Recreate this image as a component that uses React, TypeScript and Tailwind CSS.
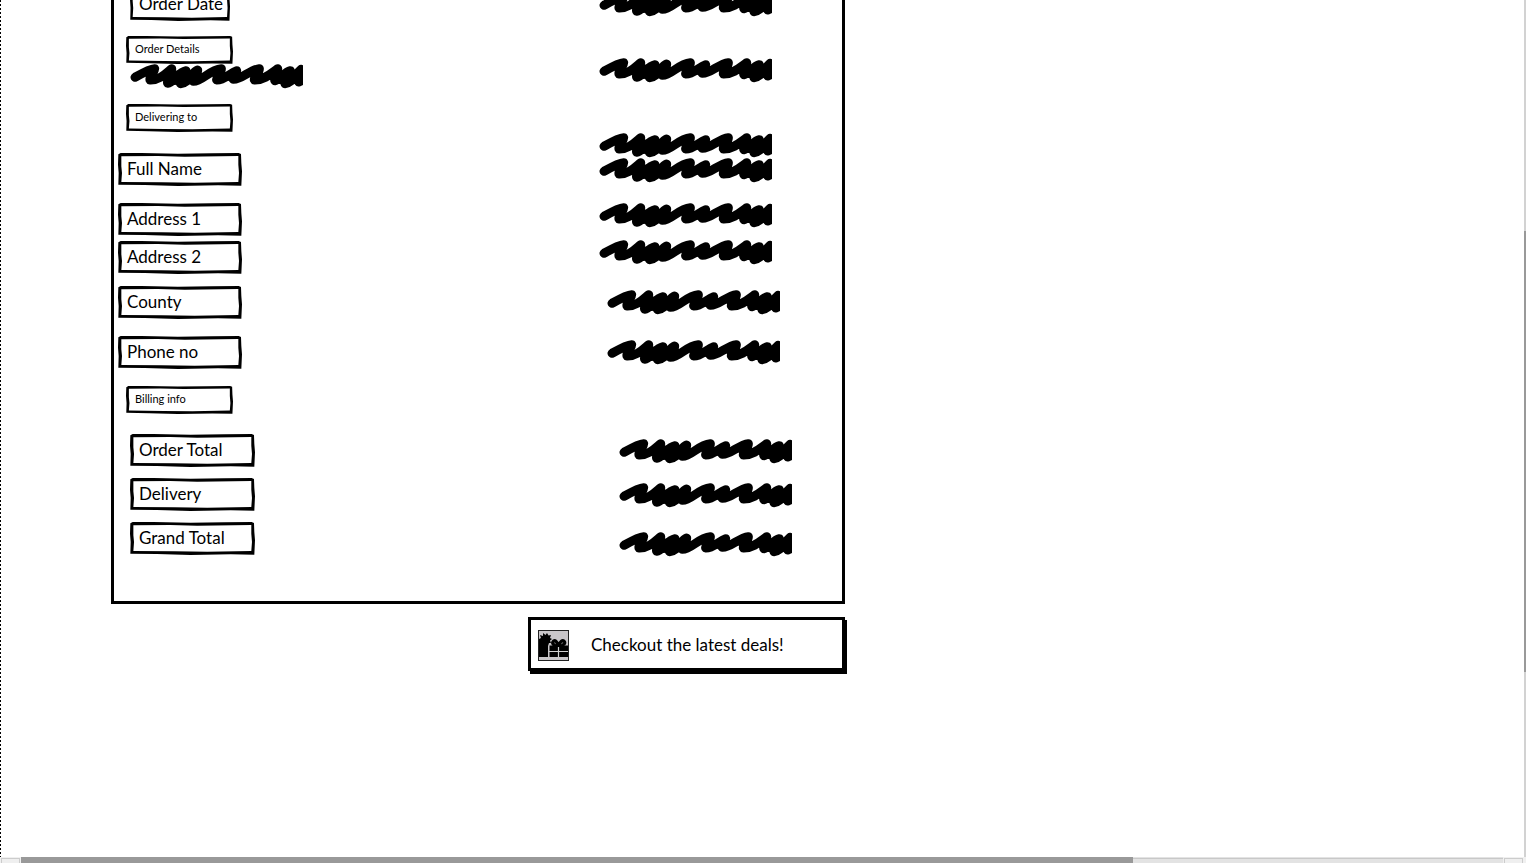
import type { ReactNode } from "react";

function SketchFrame() {
  return (
    <svg
      aria-hidden="true"
      className="pointer-events-none absolute inset-0 h-full w-full"
      viewBox="0 0 372 99"
      preserveAspectRatio="none"
    >
      <path
        fillRule="evenodd"
        d="M1 4 L8 0 L70 0 L180 2 L280 1 L362 0 L369 3 L370 30 L372 55 L370 98 L300 97 L180 99 L80 96 L1 95 L2 60 L0 35Z M10 10 L120 9 L200 11 L361 9 L361 35 L363 60 L361 87 L230 89 L130 88 L10 87 L12 60 L10 40Z"
      />
    </svg>
  );
}

function Label({ className, children }: { className: string; children: ReactNode }) {
  return (
    <div className={`relative flex shrink-0 items-center whitespace-nowrap pb-[2px] pl-[9px] ${className}`}>
      <SketchFrame />
      <span>{children}</span>
    </div>
  );
}

function Scribble({ className }: { className: string }) {
  return (
    <svg aria-hidden="true" className={`block h-[25px] w-[173px] shrink-0 ${className}`} viewBox="0 0 519 75">
      <path
        fill="none"
        stroke="black"
        strokeWidth="27"
        strokeLinecap="round"
        strokeLinejoin="round"
        d="M15 40 C36 28 58 15 74 14 C76 22 56 38 60 48 C88 49 108 28 125 14 C127 30 108 46 113 58 C130 56 145 24 168 20 C168 36 145 50 152 59 C175 58 185 25 203 18 C204 32 183 45 190 52 C216 53 238 17 274 14 C276 24 256 40 260 48 C282 49 300 27 320 20 C321 30 303 40 310 46 C335 47 360 17 388 14 C390 24 370 40 373 48 C402 49 424 28 443 14 C445 30 428 42 435 50 C450 48 463 24 481 20 C481 35 459 50 465 59 C487 58 494 32 513 16 C517 30 500 45 506 54 L535 42"
      />
      <path d="M100 36 L125 20 L205 18 L222 44 L190 60 L115 64Z M437 22 H519 V60 H445Z M60 24 H76 V46 H60Z M260 24 H290 L312 24 V50 H260Z M374 24 H392 V46 H374Z" />
    </svg>
  );
}

function GiftIcon() {
  return (
    <svg aria-hidden="true" className="h-[31px] w-[31px] shrink-0" viewBox="0 0 31 31">
      <rect x="0.5" y="0.5" width="30" height="30" fill="#c9c6c9" stroke="#222" />
      <path d="M1 9 L3 8 L2 5 L5 6 L5 3 L7.5 5 L9 3 L10.5 5.5 L13 5 L12 8 L14 9 L12 10.5 L13 13 L11 13 L10 16 L10 27 H1Z" />
      <path d="M11.5 15.5 H30 V27 H11.5Z" />
      <path
        d="M20.5 16 C19 11 17 10 15.5 11 C13.5 13 15 16 20.5 16 C26 16 28 13 26 11 C24.5 10 22 11 20.5 16Z"
        fill="#777"
        stroke="black"
        strokeWidth="3"
      />
      <path d="M20.5 17 V27 M11 21.5 H30" stroke="#d0d0d0" strokeWidth="1.2" />
    </svg>
  );
}

export default function App() {
  return (
    <div className="flex h-screen flex-col overflow-hidden bg-white font-['Lato','Noto_Sans',sans-serif] text-[17px] leading-6 text-black">
      <div className="flex min-h-0 flex-1">
        <div className="w-px shrink-0 bg-[repeating-linear-gradient(to_bottom,#000_0px,#000_2px,#fff_2px,#fff_4px)]" />
        <main className="min-w-0 flex-1 overflow-hidden pl-[110px]">
          <div className="w-full max-w-[734px]">
            <section className="flex h-[604px] justify-between border-3 border-t-0 border-black">
              <div className="-mt-3 flex flex-col pl-1">
                <Label className="ml-3 h-[33px] w-[100px]">Order Date</Label>
                <Label className="mt-[15px] ml-2 h-7 w-[107px] text-[11px]">Order Details</Label>
                <Scribble className="ml-3" />
                <Label className="mt-[15px] ml-2 h-7 w-[107px] text-[11px]">Delivering to</Label>
                <Label className="mt-[21px] h-[33px] w-[124px]">Full Name</Label>
                <Label className="mt-[17px] h-[33px] w-[124px]">Address 1</Label>
                <Label className="mt-[5px] h-[33px] w-[124px]">Address 2</Label>
                <Label className="mt-3 h-[33px] w-[124px]">County</Label>
                <Label className="mt-[17px] h-[33px] w-[124px]">Phone no</Label>
                <Label className="mt-[17px] ml-2 h-7 w-[107px] text-[11px]">Billing info</Label>
                <Label className="mt-5 ml-3 h-[33px] w-[125px]">Order Total</Label>
                <Label className="mt-[11px] ml-3 h-[33px] w-[125px]">Delivery</Label>
                <Label className="mt-[11px] ml-3 h-[33px] w-[125px]">Grand Total</Label>
              </div>
              <div className="-mt-2 flex w-[243px] flex-col">
                <Scribble className="" />
                <Scribble className="mt-[41px]" />
                <Scribble className="mt-[50px]" />
                <Scribble className="" />
                <Scribble className="mt-5" />
                <Scribble className="mt-3" />
                <Scribble className="mt-[25px] ml-2" />
                <Scribble className="mt-[25px] ml-2" />
                <Scribble className="mt-[74px] ml-5" />
                <Scribble className="mt-[19px] ml-5" />
                <Scribble className="mt-6 ml-5" />
              </div>
            </section>
            <button
              type="button"
              className="mt-[13px] ml-auto flex h-[54px] w-[317px] items-center gap-[22px] border-3 border-black bg-white pt-[2px] pl-[7px] shadow-[2px_3px_0_black]"
            >
              <GiftIcon />
              <span className="whitespace-nowrap">Checkout the latest deals!</span>
            </button>
          </div>
        </main>
        <div className="flex w-[2px] shrink-0 flex-col bg-[#d2d2d2]">
          <div className="h-[231px] shrink-0" />
          <div className="h-[441px] shrink-0 bg-[#999]" />
        </div>
      </div>
      <div className="flex h-[6px] shrink-0 bg-[#f0f0f0]">
        <div className="mt-px mr-px ml-px w-[19px] shrink-0 border border-b-0 border-[#ccc] bg-[#efefef]" />
        <div className="flex min-w-0 flex-1 bg-[#e3e3e3]">
          <div className="w-3/4 bg-[#999]" />
          <div className="mt-px flex-1 border-t border-[#c8c8c8]" />
        </div>
        <div className="mt-px mr-[3px] ml-px w-[19px] shrink-0 border border-b-0 border-[#ccc] bg-[#efefef]" />
      </div>
    </div>
  );
}
